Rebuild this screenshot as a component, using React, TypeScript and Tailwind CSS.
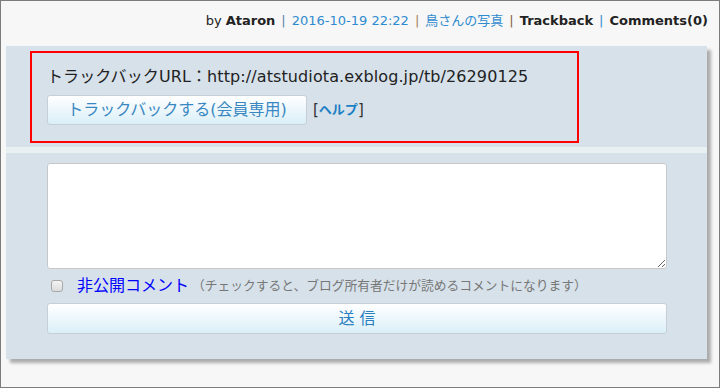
import React from "react";

export default function App() {
  const jp = { fontFamily: '"DejaVu Sans", "Noto Sans CJK JP", sans-serif' };
  return (
    <div
      className="w-[720px] h-[388px] bg-[#f7f7f7] border border-[#7c7c7c] overflow-hidden"
      style={jp}
    >
      <div className="h-[45px] flex items-center justify-end pr-[11px] pb-[6px] text-[13px] text-[#222] whitespace-nowrap">
        <span>by </span>
        <span className="font-bold ml-[4px]">Ataron</span>
        <span className="mx-[6px] text-[#5a82aa]">|</span>
        <span className="text-[#2f8bcf]">2016-10-19 22:22</span>
        <span className="mx-[6px] text-[#a08060]">|</span>
        <span className="text-[#2f8bcf]">鳥さんの写真</span>
        <span className="mx-[6px] text-[#806040]">|</span>
        <span className="font-bold">Trackback</span>
        <span className="mx-[6px] text-[#2f8bcf]">|</span>
        <span className="font-bold">Comments(0)</span>
      </div>

      <div className="ml-[5px] w-[701px] h-[313px] bg-[#d6e1ea] shadow-[4px_4px_3px_rgba(0,0,0,0.3)] flex flex-col">
        <div className="pt-[5px] pl-[24px] h-[101px]">
          <div className="w-[549px] h-[92px] border-2 border-[#ff0000] pl-[15px] pt-[12px]">
            <div className="text-[16px] leading-[24px] text-[#222] whitespace-nowrap tracking-[0.1px]">
              トラックバックURL：http://atstudiota.exblog.jp/tb/26290125
            </div>
            <div className="flex items-center mt-[6px]">
              <button className="w-[260px] h-[30px] rounded-[3px] border border-[#c8cfd4] bg-gradient-to-b from-[#ffffff] to-[#daeff8] text-[16px] text-[#3a88c2]">
                トラックバックする(会員専用)
              </button>
              <span className="ml-[6px] text-[15px] text-[#333]">[</span>
              <span className="text-[13px] text-[#1c7fc4] font-bold">ヘルプ</span>
              <span className="text-[15px] text-[#333]">]</span>
            </div>
          </div>
        </div>
        <div className="h-[6px] bg-[#e8f0f2]" />
        <div className="pl-[41px] pt-[10px]">
          <textarea className="block w-[620px] h-[106px] bg-white border border-[#c6c9cc] rounded-[3px] resize-y outline-none" />
          <div className="flex items-center h-[34px] whitespace-nowrap">
            <span className="ml-[4px] w-[12px] h-[12px] rounded-[3px] border border-[#a8a8a8] bg-gradient-to-b from-[#f4f4f4] to-[#dcdcdc]" />
            <span className="ml-[14px] text-[16px] text-[#0000ff]">非公開コメント</span>
            <span className="ml-[3px] text-[12.75px] text-[#777]">（チェックすると、ブログ所有者だけが読めるコメントになります）</span>
          </div>
          <button className="block w-[620px] h-[31px] rounded-[3px] border border-[#c8cfd4] bg-gradient-to-b from-[#ffffff] to-[#daeff8] text-[16px] text-[#2a7fc0]">
            送 信
          </button>
        </div>
      </div>
    </div>
  );
}
